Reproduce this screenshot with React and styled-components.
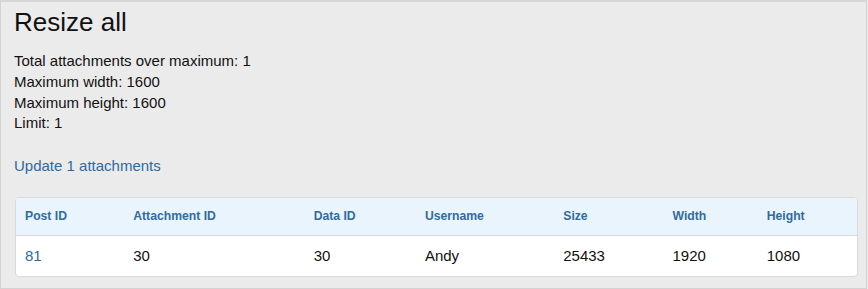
import React from "react";
import styled, { createGlobalStyle } from "styled-components";

const GlobalStyle = createGlobalStyle`
    html, body {
        margin: 0;
        padding: 0;
        background: #ecebec;
        font-family: "Liberation Sans", Arial, sans-serif;
    }
`;

const Frame = styled.div`
    box-sizing: border-box;
    width: 867px;
    height: 289px;
    border: 1px solid #d3d3d3;
    border-top: 2px solid #d6d6d6;
    background: #ecebec;
    padding: 5px 10px 0 13px;
    color: #111;
`;

const Title = styled.h1`
    margin: 0 0 14px 0;
    font-size: 26px;
    font-weight: normal;
    line-height: 30px;
    color: #111;
`;

const InfoList = styled.div`
    display: flex;
    flex-direction: column;
    font-size: 15px;
    line-height: 20.8px;
`;

const Link = styled.a`
    color: #2c6aa0;
    text-decoration: none;
    cursor: pointer;
`;

const ActionRow = styled.div`
    margin-top: 22px;
    font-size: 15px;
    line-height: 20px;
`;

const Card = styled.div`
    margin-top: 21px;
    margin-left: 1px;
    width: 841px;
    border: 1px solid #d9dadc;
    border-radius: 4px;
    overflow: hidden;
    background: #fff;
`;

const Table = styled.table`
    width: 100%;
    border-collapse: collapse;
    table-layout: fixed;
`;

const HeadRow = styled.tr`
    background: #eaf4fd;
    height: 37px;
    border-bottom: 1px solid #d5dbe1;
`;

const Th = styled.th`
    width: ${(p) => p.w - 9}px;
    padding: 0 0 0 9px;
    text-align: left;
    font-size: 12.2px;
    font-weight: bold;
    color: #2f6c9f;
    white-space: nowrap;
`;

const BodyRow = styled.tr`
    height: 41px;
`;

const Td = styled.td`
    padding: 0 0 0 9px;
    font-size: 15px;
    color: #111;
`;

const columns = [
    { name: "Post ID", w: 108 },
    { name: "Attachment ID", w: 180 },
    { name: "Data ID", w: 111 },
    { name: "Username", w: 138 },
    { name: "Size", w: 109 },
    { name: "Width", w: 94 },
    { name: "Height", w: 99 },
];

const rows = [
    { postId: "81", attachmentId: "30", dataId: "30", username: "Andy", size: "25433", width: "1920", height: "1080" },
];

export default function App() {
    return (
        <>
            <GlobalStyle />
            <Frame>
                <Title>Resize all</Title>
                <InfoList>
                    <span>Total attachments over maximum: 1</span>
                    <span>Maximum width: 1600</span>
                    <span>Maximum height: 1600</span>
                    <span>Limit: 1</span>
                </InfoList>
                <ActionRow>
                    <Link>Update 1 attachments</Link>
                </ActionRow>
                <Card>
                    <Table>
                        <thead>
                            <HeadRow>
                                {columns.map((c) => (
                                    <Th key={c.name} w={c.w}>{c.name}</Th>
                                ))}
                            </HeadRow>
                        </thead>
                        <tbody>
                            {rows.map((r) => (
                                <BodyRow key={r.postId}>
                                    <Td><Link>{r.postId}</Link></Td>
                                    <Td>{r.attachmentId}</Td>
                                    <Td>{r.dataId}</Td>
                                    <Td>{r.username}</Td>
                                    <Td>{r.size}</Td>
                                    <Td>{r.width}</Td>
                                    <Td>{r.height}</Td>
                                </BodyRow>
                            ))}
                        </tbody>
                    </Table>
                </Card>
            </Frame>
        </>
    );
}
